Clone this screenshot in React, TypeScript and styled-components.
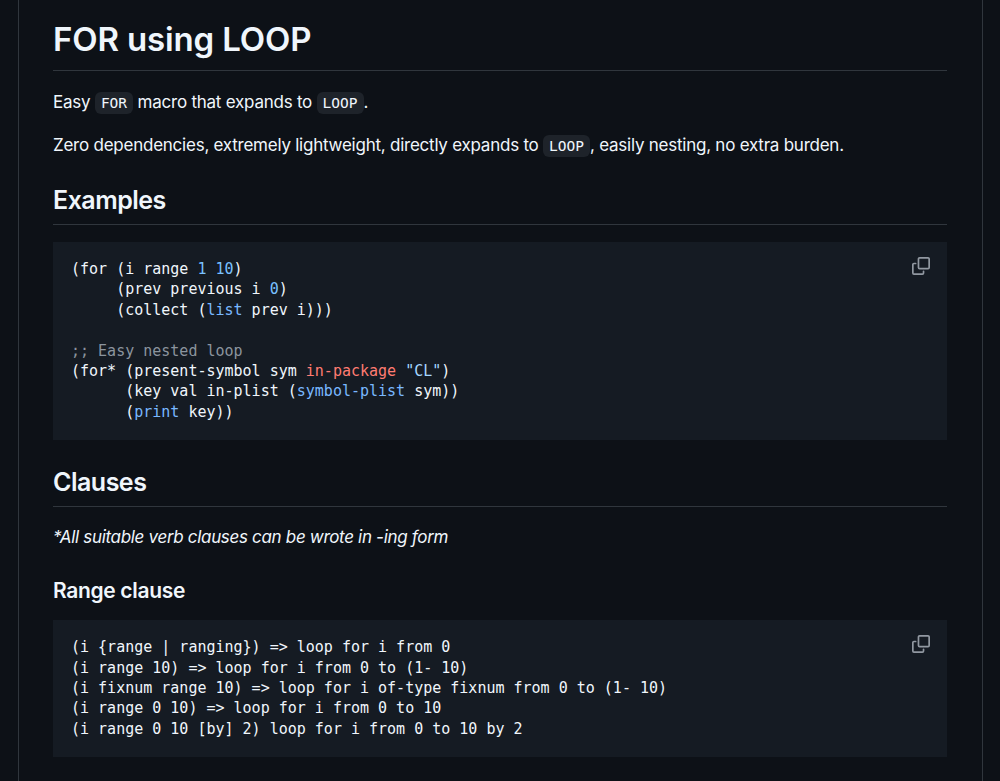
import React from "react";
import styled, { createGlobalStyle } from "styled-components";

const Global = createGlobalStyle`
  html, body { margin: 0; padding: 0; background: #0d1117; }
  body { width: 1000px; height: 781px; overflow: hidden; }
`;

const Article = styled.article`
  box-sizing: border-box;
  margin: 0 17px 0 18px;
  height: 781px;
  overflow: hidden;
  padding: 17px 35px 0 34px;
  border-left: 1px solid #30363d;
  border-right: 1px solid #30363d;
  color: #f0f6fc;
  font-family: Inter, "Liberation Sans", sans-serif;
  font-size: 17px;
  line-height: 27px;
  letter-spacing: -0.24px;
`;

const Title = styled.h1`
  margin: 0 0 18px;
  padding-bottom: 9px;
  border-bottom: 1px solid #30363d;
  font-size: 33px;
  line-height: 44px;
  font-weight: 600;
  letter-spacing: -0.15px;
`;

const Section = styled.h2`
  margin: 0 0 17px;
  padding-bottom: 7px;
  border-bottom: 1px solid #30363d;
  font-size: 25px;
  line-height: 33px;
  font-weight: 600;
  letter-spacing: -0.5px;
`;

const SubSection = styled.h3`
  margin: 0 0 15px;
  font-size: 21px;
  line-height: 28px;
  font-weight: 600;
  letter-spacing: -0.33px;
`;

const Para = styled.p`
  margin: 0 0 15px;
`;

const LastPara = styled(Para)`
  margin-bottom: 24px;
`;

const Note = styled.p`
  margin: 0 0 26px;
  font-style: italic;
  letter-spacing: -0.32px;
`;

const InlineCode = styled.code`
  font-family: "DejaVu Sans Mono", "Liberation Mono", monospace;
  font-size: 14.5px;
  letter-spacing: 0;
  padding: 3px 6px;
  border-radius: 6px;
  background: rgba(101, 108, 118, 0.2);
`;

const CodeBlock = styled.div<{ $gap: number }>`
  position: relative;
  margin-bottom: ${(p) => p.$gap}px;
  padding: 17px 18px 18px;
  background: #151b23;
`;

const Pre = styled.pre`
  margin: 0;
  font-family: "DejaVu Sans Mono", "Liberation Mono", monospace;
  font-size: 15px;
  line-height: 20.4px;
  letter-spacing: 0;
  color: #f0f6fc;
`;

const Num = styled.span`color: #79c0ff;`;
const Fn = styled.span`color: #79b8ff;`;
const Kw = styled.span`color: #ff7b72;`;
const Str = styled.span`color: #a5d6ff;`;
const Comment = styled.span`color: #8b949e;`;

const CopyIcon = styled.svg`
  position: absolute;
  top: 15px;
  right: 17px;
  width: 18px;
  height: 18px;
  color: #9198a1;
`;

const Copy = () => (
  <CopyIcon viewBox="0 0 16 16" fill="currentColor">
    <path d="M0 6.75C0 5.784.784 5 1.75 5h1.5a.75.75 0 0 1 0 1.5h-1.5a.25.25 0 0 0-.25.25v7.5c0 .138.112.25.25.25h7.5a.25.25 0 0 0 .25-.25v-1.5a.75.75 0 0 1 1.5 0v1.5A1.75 1.75 0 0 1 9.25 16h-7.5A1.75 1.75 0 0 1 0 14.25Z" />
    <path d="M5 1.75C5 .784 5.784 0 6.75 0h7.5C15.216 0 16 .784 16 1.75v7.5A1.75 1.75 0 0 1 14.25 11h-7.5A1.75 1.75 0 0 1 5 9.25Zm1.75-.25a.25.25 0 0 0-.25.25v7.5c0 .138.112.25.25.25h7.5a.25.25 0 0 0 .25-.25v-7.5a.25.25 0 0 0-.25-.25Z" />
  </CopyIcon>
);

export default function App() {
  return (
    <>
      <Global />
      <Article>
        <Title>FOR using LOOP</Title>
        <Para>
          Easy <InlineCode>FOR</InlineCode> macro that expands to <InlineCode>LOOP</InlineCode>.
        </Para>
        <LastPara>
          Zero dependencies, extremely lightweight, directly expands to <InlineCode>LOOP</InlineCode>, easily nesting, no extra burden.
        </LastPara>
        <Section>Examples</Section>
        <CodeBlock $gap={26}>
          <Pre>
            {"(for (i range "}<Num>1</Num> <Num>10</Num>{")\n     (prev previous i "}<Num>0</Num>{")\n     (collect ("}<Fn>list</Fn>{" prev i)))\n\n"}
            <Comment>;; Easy nested loop</Comment>
            {"\n(for* (present-symbol sym "}<Kw>in-package</Kw> <Str>"CL"</Str>{")\n      (key val in-plist ("}<Fn>symbol-plist</Fn>{" sym))\n      ("}<Fn>print</Fn>{" key))"}
          </Pre>
          <Copy />
        </CodeBlock>
        <Section>Clauses</Section>
        <Note>*All suitable verb clauses can be wrote in -ing form</Note>
        <SubSection>Range clause</SubSection>
        <CodeBlock $gap={0}>
          <Pre>
            {`(i {range | ranging}) => loop for i from 0
(i range 10) => loop for i from 0 to (1- 10)
(i fixnum range 10) => loop for i of-type fixnum from 0 to (1- 10)
(i range 0 10) => loop for i from 0 to 10
(i range 0 10 [by] 2) loop for i from 0 to 10 by 2`}
          </Pre>
          <Copy />
        </CodeBlock>
      </Article>
    </>
  );
}
